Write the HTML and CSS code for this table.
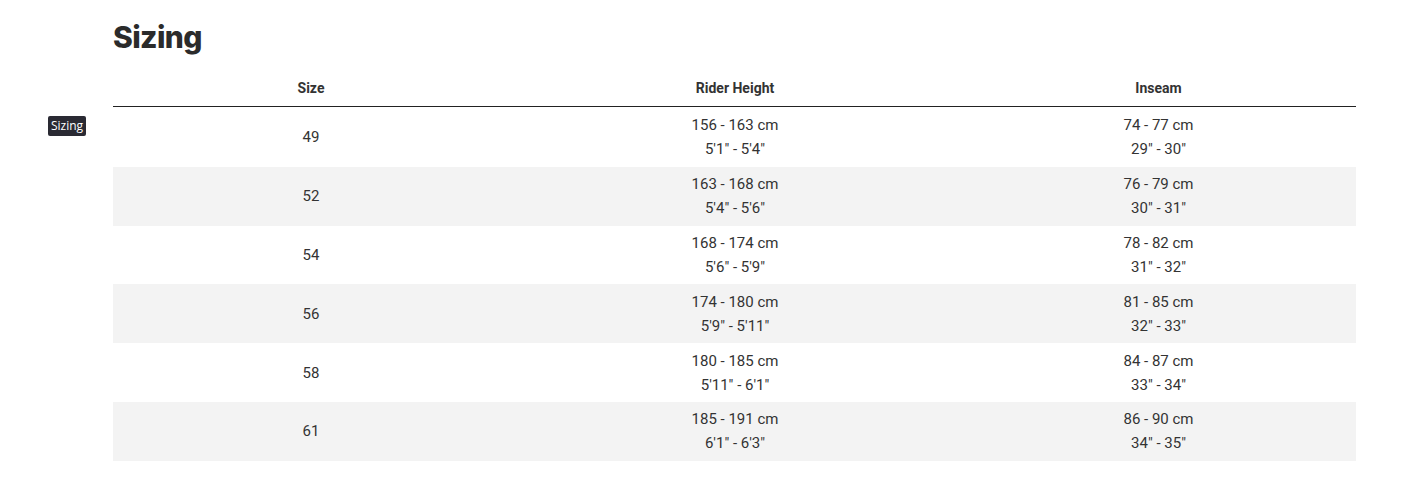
FILE: index.html
```html
<!DOCTYPE html>
<html>
<head>
<meta charset="utf-8">
<link rel="stylesheet" href="styles.css">
</head>
<body>
<div class="tip">Sizing</div>
<section class="sizing">
  <h2 class="title">Sizing</h2>
  <table class="chart">
    <thead>
      <tr><th class="c1">Size</th><th class="c2">Rider Height</th><th class="c3">Inseam</th></tr>
    </thead>
    <tbody>
      <tr><td>49</td><td>156 - 163 cm<br>5'1" - 5'4"</td><td>74 - 77 cm<br>29" - 30"</td></tr>
      <tr><td>52</td><td>163 - 168 cm<br>5'4" - 5'6"</td><td>76 - 79 cm<br>30" - 31"</td></tr>
      <tr><td>54</td><td>168 - 174 cm<br>5'6" - 5'9"</td><td>78 - 82 cm<br>31" - 32"</td></tr>
      <tr><td>56</td><td>174 - 180 cm<br>5'9" - 5'11"</td><td>81 - 85 cm<br>32" - 33"</td></tr>
      <tr><td>58</td><td>180 - 185 cm<br>5'11" - 6'1"</td><td>84 - 87 cm<br>33" - 34"</td></tr>
      <tr><td>61</td><td>185 - 191 cm<br>6'1" - 6'3"</td><td>86 - 90 cm<br>34" - 35"</td></tr>
    </tbody>
  </table>
</section>
</body>
</html>
```
FILE: styles.css
```css
html, body { margin: 0; padding: 0; background: #fff; }
body { font-family: Roboto, "Liberation Sans", sans-serif; color: #333; position: relative; }
.sizing { padding: 19px 56px 0 113px; }
.title {
  margin: 0 0 16px 0;
  font-family: Inter, "Liberation Sans", sans-serif;
  font-weight: 800;
  font-size: 30px;
  line-height: 36px;
  letter-spacing: -0.6px;
  color: #2b2b2b;
}
.chart { width: 1243px; border-collapse: collapse; }
.chart th {
  font-size: 14px; font-weight: 700; color: #333;
  padding: 8px 0 9px; line-height: 18px;
  border-bottom: 1px solid #222;
  text-align: center;
}
.c1 { width: 396px; }
.c2 { width: 452px; }
.c3 { width: 395px; }
.chart td {
  font-size: 15px; line-height: 24px; text-align: center;
  padding: 5.4px 0; color: #333;
}
.chart tbody tr:first-child td { padding-top: 6.4px; }
.chart tbody tr:nth-child(even) td { background: #f3f3f3; }
.tip {
  position: absolute; left: 48px; top: 116px;
  background: #2a2a33; color: #fff;
  font-family: "Segoe UI", "Open Sans", sans-serif; font-size: 12px;
  line-height: 20px; padding: 0 3px; border-radius: 2px;
}
```
